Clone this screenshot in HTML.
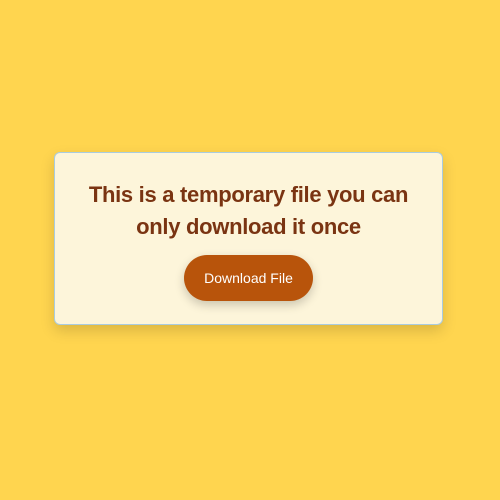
<!DOCTYPE html>
<html><head><style>
html,body{margin:0;padding:0;width:500px;height:500px;background:#ffd54f;font-family:"Liberation Sans",sans-serif;}
.card{position:absolute;left:54px;top:152px;width:387px;height:171px;background:#fdf5da;border:1px solid #a9cce0;border-radius:6px;box-shadow:0 6px 14px rgba(0,0,0,0.15);text-align:center;}
h1{margin:26px 0 0;font-size:22px;line-height:32px;color:#7a3412;font-weight:bold;letter-spacing:-0.3px;}
.btn{position:absolute;left:129px;top:102px;width:129px;height:46px;border-radius:23px;background:#b8540b;color:#fff;font-size:14px;line-height:46px;box-shadow:0 4px 10px rgba(0,0,0,0.2);}
</style></head><body>
<div class="card"><h1>This is a temporary file you can<br>only download it once</h1><div class="btn">Download File</div></div>
</body></html>
